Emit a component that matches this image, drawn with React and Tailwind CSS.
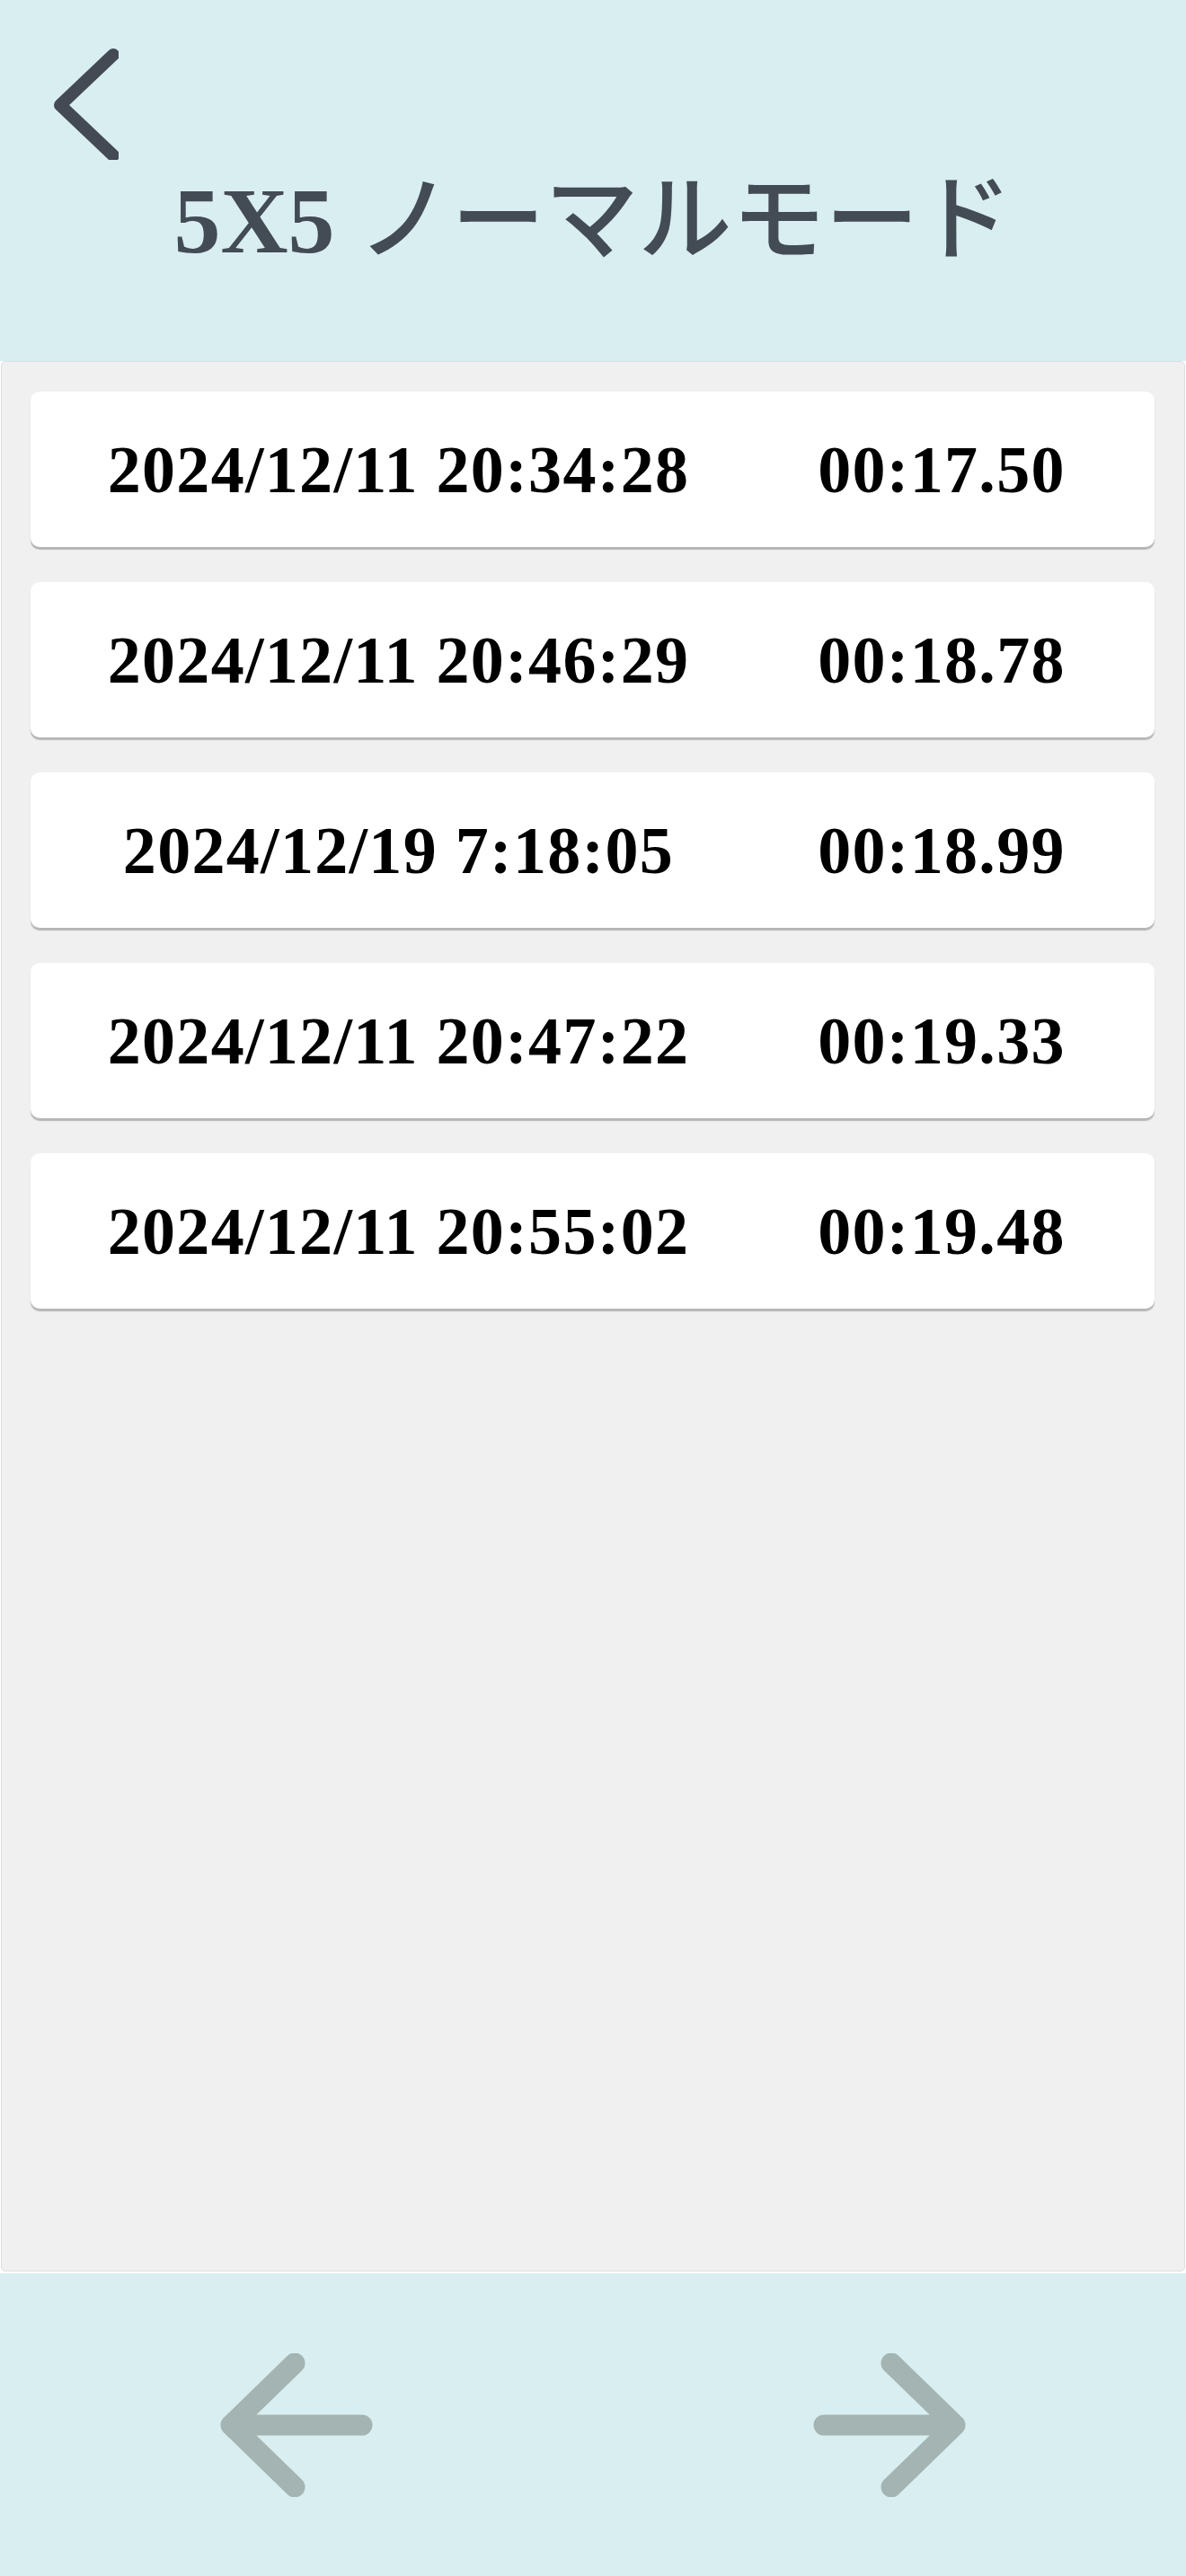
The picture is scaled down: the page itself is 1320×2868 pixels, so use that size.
import React from 'react'

const records = [
  { date: '2024/12/11 20:34:28', time: '00:17.50' },
  { date: '2024/12/11 20:46:29', time: '00:18.78' },
  { date: '2024/12/19 7:18:05', time: '00:18.99' },
  { date: '2024/12/11 20:47:22', time: '00:19.33' },
  { date: '2024/12/11 20:55:02', time: '00:19.48' },
]

const serif = "font-['Liberation_Serif','Noto_Sans_CJK_JP',serif]"

function RecordRow({ date, time }) {
  return (
    <div className="grid h-[173px] grid-cols-[1fr_432px] items-center rounded-[10px] bg-white px-[21px] shadow-[0_3px_1px_rgba(0,0,0,0.24)]">
      <p className={`${serif} text-center text-[74px] font-bold leading-none tracking-[1.3px] text-black`}>{date}</p>
      <p className={`${serif} text-center text-[74px] font-bold leading-none tracking-[1.3px] text-black`}>{time}</p>
    </div>
  )
}

function ArrowLeft() {
  return (
    <svg width="170" height="160" viewBox="0 0 170 160" fill="none" stroke="#a3b4b2" strokeWidth="23" strokeLinecap="round" strokeLinejoin="round">
      <path d="M83 11 12 80l71 69M12 80h146" />
    </svg>
  )
}

function ArrowRight() {
  return (
    <svg width="170" height="160" viewBox="0 0 170 160" fill="none" stroke="#a3b4b2" strokeWidth="23" strokeLinecap="round" strokeLinejoin="round">
      <path d="M87 11l71 69-71 69M158 80H12" />
    </svg>
  )
}

export default function App() {
  return (
    <div className="flex h-[2868px] w-full flex-col bg-white">
      {/* Header */}
      <header className="flex h-[402px] shrink-0 flex-col bg-[#d9eef0]">
        <button className="ml-[52px] mt-[48px] block w-[80px]">
          <svg width="80" height="130" viewBox="0 0 80 130" fill="none" stroke="#434a54" strokeWidth="14" strokeLinecap="round" strokeLinejoin="round">
            <path d="M74 13 15 69l59 56" />
          </svg>
        </button>
        <h1 className="mt-[6px] text-center text-[104px] leading-[104px] text-[#434b55]">
          <span className="font-['Liberation_Serif',serif] font-bold">5X5 </span>
          <span className="font-['Noto_Sans_CJK_JP',sans-serif] font-medium">ノーマルモード</span>
        </h1>
      </header>

      {/* Records */}
      <main className="mx-[1px] mb-[2px] flex flex-1 flex-col gap-[39px] rounded-[5px] border border-[#dedede] bg-[#f0f0f0] pl-[32px] pr-[33px] pt-[33px]">
        {records.map((r) => (
          <RecordRow key={r.date} {...r} />
        ))}
      </main>

      {/* Pager */}
      <footer className="grid h-[337px] shrink-0 grid-cols-2 items-center bg-[#d9eef0]">
        <button className="flex justify-center">
          <ArrowLeft />
        </button>
        <button className="flex justify-center">
          <ArrowRight />
        </button>
      </footer>
    </div>
  )
}
